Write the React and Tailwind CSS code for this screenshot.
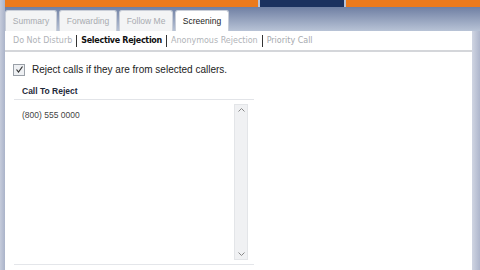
export default function App() {
  const tabs = [
    ["Summary", "w-[52px]"],
    ["Forwarding", "w-[58px]"],
    ["Follow Me", "w-[54px]"],
    ["Screening", "w-[54px]"],
  ];
  return (
    <div className="w-[480px] h-[270px] overflow-hidden flex bg-[#b9c2d6]" style={{ fontFamily: '"Liberation Sans", Arial, sans-serif' }}>
      <div className="w-[5px] h-full bg-[linear-gradient(to_right,#c5cbdb,#aab3c9)]" />
      <div className="flex-1 flex flex-col">
        <div className="h-[7px] flex">
          <div className="w-[253px] bg-[#ec7a1c]" />
          <div className="w-[84px] bg-[#1b315f] mx-[2px]" />
          <div className="flex-1 bg-[#ec7a1c]" />
        </div>
        <div className="h-[24px] bg-[linear-gradient(to_bottom,#6f7fa3,#b8c3d6)] flex items-end gap-[2px]">
          {tabs.map(([t, w]) => {
            const active = t === "Screening";
            return (
              <div
                key={t}
                className={
                  active
                    ? "h-[21px] " + w + " flex items-center justify-center bg-white border border-[#c9ced8] border-b-0 rounded-t-[3px] text-[8.5px] text-[#222]"
                    : "h-[21px] " + w + " flex items-center justify-center bg-[#f3f4f5] border border-[#c9ced8] border-b-0 rounded-t-[3px] text-[8.5px] text-[#a8abb0]"
                }
              >
                {t}
              </div>
            );
          })}
        </div>
        <div className="flex-1 flex">
          <div className="flex-1 bg-white flex flex-col">
            <div className="h-[20px] mt-[1px] flex items-center pl-[8px] text-[8px] border-b-2 border-[#d4d6da]" style={{ fontFamily: '"DejaVu Sans", Verdana, sans-serif' }}>
              <span className="text-[#b0b3b8]">Do Not Disturb</span>
              <span className="mx-[4px] w-px h-[12px] bg-[#333]" />
              <span className="text-[#111] font-bold tracking-[-0.3px]">Selective Rejection</span>
              <span className="mx-[4px] w-px h-[12px] bg-[#333]" />
              <span className="text-[#b0b3b8]">Anonymous Rejection</span>
              <span className="mx-[4px] w-px h-[12px] bg-[#333]" />
              <span className="text-[#a6a9ae]">Priority Call</span>
            </div>
            <div className="flex items-center mt-[10px] ml-[8px] gap-[7px]">
              <div className="w-[12px] h-[12px] border border-[#9aa0a8] bg-[#eef0f3] flex items-center justify-center">
                <svg width="9" height="9" viewBox="0 0 9 9">
                  <path d="M1.5 4.5 L3.5 7 L7.5 1.5" stroke="#333" strokeWidth="1.2" fill="none" />
                </svg>
              </div>
              <span className="text-[10px] text-[#222]">Reject calls if they are from selected callers.</span>
            </div>
            <div className="ml-[9px] mt-[6px] w-[240px] flex-1 flex flex-col mb-[5px] border-b border-[#e4e6ea]">
              <div className="h-[17px] flex items-center pl-[8px] text-[8.5px] font-bold text-[#1e2a3a] border-b border-[#e2e4e8]">
                Call To Reject
              </div>
              <div className="flex-1 flex pt-[4px]">
                <div className="flex-1 pl-[8px] pt-[5px] text-[8.5px] text-[#444]">(800) 555 0000</div>
                <div className="w-[14px] mr-[6px] mb-[4px] bg-[#f0f1f3] border border-[#e3e5e8] flex flex-col justify-between items-center py-[3px]">
                  <svg width="7" height="4" viewBox="0 0 7 4"><path d="M0.5 3.5 L3.5 0.5 L6.5 3.5" stroke="#888" fill="none" /></svg>
                  <svg width="7" height="4" viewBox="0 0 7 4"><path d="M0.5 0.5 L3.5 3.5 L6.5 0.5" stroke="#888" fill="none" /></svg>
                </div>
              </div>
            </div>
          </div>
          <div className="w-[8px] bg-[linear-gradient(to_right,#d0d5e2,#aeb6cc)]" />
        </div>
      </div>
    </div>
  );
}
